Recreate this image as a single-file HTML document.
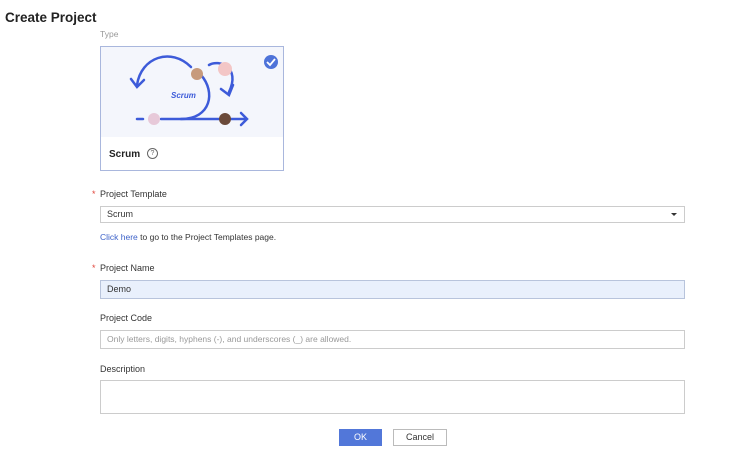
<!DOCTYPE html>
<html><head><style>
body{margin:0;width:744px;height:464px;background:#fff;font-family:"Liberation Sans",Arial,sans-serif;position:relative;overflow:hidden}
.a{position:absolute}
.lbl{font-size:9px;color:#333}
.req:before{content:"*";color:#e0443a;position:absolute;left:-8px;top:0}
.inp{position:absolute;left:100px;width:585px;border:1px solid #ccc;box-sizing:border-box;font-size:9px;color:#333;padding-left:6px}
</style></head><body>
<div class="a" style="left:5px;top:10px;font-size:13.5px;font-weight:bold;color:#222">Create Project</div>
<div class="a" style="left:100px;top:29px;font-size:8.5px;color:#999">Type</div>
<div class="a" style="left:100px;top:46px;width:182px;height:123px;border:1px solid #a9b7dd;background:#fff">
 <div class="a" style="left:0;top:0;width:182px;height:90px;background:#f4f6fc"></div>
 <svg class="a" style="left:0;top:0" width="182" height="90" viewBox="0 0 182 90">
  <g fill="none" stroke="#3d5bd9" stroke-width="2.5" stroke-linecap="round">
   <path d="M36 72 H42 M60 72 H118 M128 72 H145"/>
   <path d="M140 66 L146 72 L140 78"/>
   <path d="M90 20 C70 0 40 10 36 38"/>
   <path d="M30 32 L36 40 L43 33"/>
   <path d="M100 28 C115 45 110 72 80 72"/>
   <path d="M108 18 C118 12 140 20 128 45"/>
   <path d="M120 42 L128 48 L132 38"/>
  </g>
  <text x="70" y="51" font-size="8" font-weight="bold" font-style="italic" fill="#3d5bd9" font-family="Liberation Sans">Scrum</text>
  <circle cx="96" cy="27" r="6" fill="#c79a7c"/><circle cx="124" cy="22" r="7" fill="#f3c6c6"/>
  <circle cx="53" cy="72" r="6" fill="#e7c9d9"/><circle cx="124" cy="72" r="6" fill="#6b4a3a"/>
  <circle cx="170" cy="15" r="7" fill="#4e73d9"/>
  <path d="M166 15 L169 18 L174 12" stroke="#fff" stroke-width="1.8" fill="none"/>
 </svg>
 <div class="a" style="left:8px;top:102px;font-size:10px;font-weight:bold;color:#222">Scrum</div>
 <div class="a" style="left:46px;top:101px;width:9px;height:9px;border:1px solid #666;border-radius:50%;font-size:7px;line-height:9px;text-align:center;color:#666">?</div>
</div>
<div class="a lbl req" style="left:100px;top:189px">Project Template</div>
<div class="inp" style="top:206px;height:17px;line-height:15px">Scrum<span style="position:absolute;right:7px;top:6px;border-left:3px solid transparent;border-right:3px solid transparent;border-top:3px solid #333"></span></div>
<div class="a" style="left:100px;top:232px;font-size:8.5px;color:#333"><span style="color:#3d62c9">Click here</span> to go to the Project Templates page.</div>
<div class="a lbl req" style="left:100px;top:263px">Project Name</div>
<div class="inp" style="top:280px;height:19px;line-height:17px;background:#e9f0fc;border-color:#b8c4dc">Demo</div>
<div class="a lbl" style="left:100px;top:313px">Project Code</div>
<div class="inp" style="top:330px;height:19px;line-height:17px;color:#999;font-size:8.5px">Only letters, digits, hyphens (-), and underscores (_) are allowed.</div>
<div class="a lbl" style="left:100px;top:364px">Description</div>
<div class="inp" style="top:380px;height:34px"></div>
<div class="a" style="left:339px;top:429px;width:43px;height:17px;background:#5277d9;color:#fff;font-size:9px;text-align:center;line-height:17px">OK</div>
<div class="a" style="left:393px;top:429px;width:54px;height:17px;border:1px solid #bbb;box-sizing:border-box;color:#333;font-size:9px;text-align:center;line-height:15px">Cancel</div>
</body></html>
